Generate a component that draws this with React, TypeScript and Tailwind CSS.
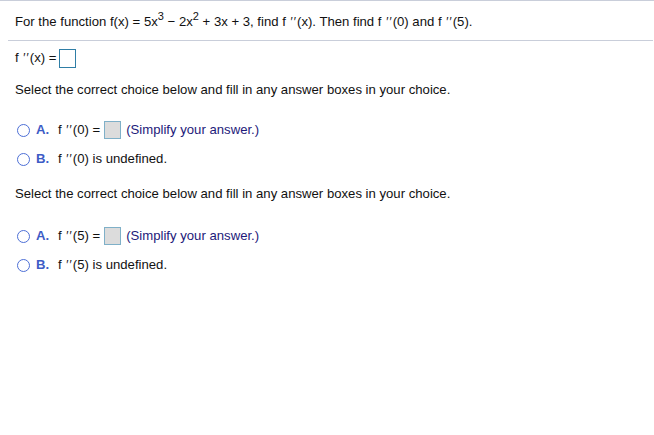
import React from 'react';

const Prime = () => <span className="text-[12px] tracking-[1px] ml-[1px]">{'\u2032\u2032'}</span>;

const AnswerBox = () => (
  <span className="inline-block w-[17px] h-[18px] bg-[#dcdcdc] border border-[#7fb0c8] align-middle ml-[4px] mr-[5px]" />
);

const Radio = () => (
  <span className="inline-block w-[13px] h-[13px] rounded-full border border-[#4d6fd6] bg-white" />
);

const Choice: React.FC<{ letter: string; children: React.ReactNode }> = ({ letter, children }) => (
  <div className="flex items-center h-[20px]">
    <span className="ml-[17px] mr-[6px] flex items-center"><Radio /></span>
    <span className="font-bold text-[#3d5cc6] w-[22px]">{letter}.</span>
    <span className="flex items-center">{children}</span>
  </div>
);

const ChoiceGroup: React.FC<{ x: string; gap: string }> = ({ x, gap }) => (
  <div>
    <p className="ml-[15px] h-[20px] flex items-center">Select the correct choice below and fill in any answer boxes in your choice.</p>
    <div className={gap}>
      <Choice letter="A">
        <span>f <Prime />({x}) =</span>
        <AnswerBox />
        <span className="text-[#1d1a7a]">(Simplify your answer.)</span>
      </Choice>
    </div>
    <div className="mt-[9px]">
      <Choice letter="B">
        <span>f <Prime />({x}) is undefined.</span>
      </Choice>
    </div>
  </div>
);

export default function App() {
  return (
    <div className="w-[654px] h-[435px] bg-white text-[13.15px] text-[#111] font-['Liberation_Sans',Arial,sans-serif] border-t border-[#c9ceda]">
      <div className="h-[39px] flex items-end pb-[8px] pl-[15px]">
        <p>
          For the function f(x) = 5x<sup className="text-[11px] relative -top-[6px]">3</sup> − 2x<sup className="text-[11px] relative -top-[6px]">2</sup> + 3x + 3, find f <Prime />(x). Then find f <Prime />(0) and f <Prime />(5).
        </p>
      </div>
      <div className="ml-[8px] mr-[1px] border-t border-[#c9ceda]" />
      <div className="pl-[15px] h-[32px] flex items-center mt-[1px]">
        <span>f <Prime />(x) =</span>
        <span className="inline-block w-[17px] h-[19px] border border-[#2f7ea6] bg-white ml-[3px]" />
      </div>
      <div className="mt-[6px]">
        <ChoiceGroup x="0" gap="mt-[20px]" />
      </div>
      <div className="mt-[15px]">
        <ChoiceGroup x="5" gap="mt-[22px]" />
      </div>
    </div>
  );
}
